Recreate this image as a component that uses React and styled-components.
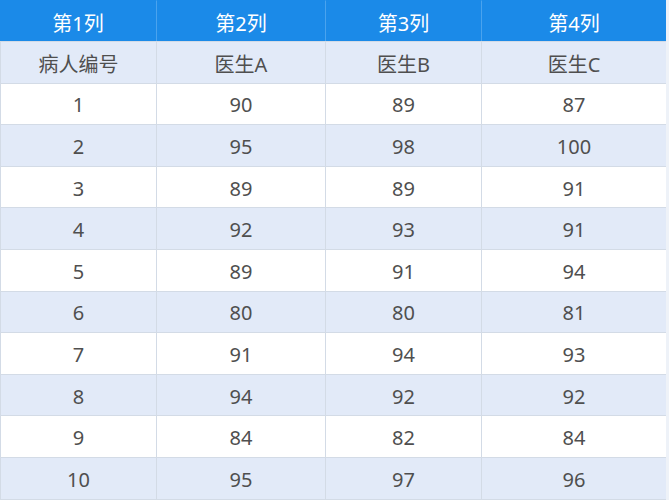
import React from "react";
import styled, { createGlobalStyle } from "styled-components";

const Global = createGlobalStyle`
  body {
    margin: 0;
    background: #eef2f8;
    font-family: "Noto Sans", "Noto Sans CJK SC", sans-serif;
  }
`;

const Table = styled.div`
  width: 666px;
  display: grid;
  grid-template-columns: 156px 169px 156px 185px;
  border-bottom: 1px solid #d3dbe6;
  border-right: 1px solid #d3dbe6;
  box-sizing: border-box;
`;

const Cell = styled.div`
  height: ${(p) => (p.$head ? "41px" : "41.6px")};
  display: flex;
  align-items: center;
  justify-content: center;
  box-sizing: border-box;
  padding-top: 2px;
  font-size: 20px;
  color: ${(p) => (p.$head ? "#ffffff" : "#4f4f4f")};
  font-weight: 400;
  background: ${(p) => (p.$head ? "#1b8ae8" : p.$alt ? "#e2eaf8" : "#ffffff")};
  border-left: 1px solid ${(p) => (p.$head ? "#4aa3ee" : "#d3dbe6")};
  border-top: 1px solid ${(p) => (p.$head ? "#1b8ae8" : "#d3dbe6")};
  &:first-child {
    border-left: none;
  }
`;

const header = ["第1列", "第2列", "第3列", "第4列"];
const rows = [
  ["病人编号", "医生A", "医生B", "医生C"],
  ["1", "90", "89", "87"],
  ["2", "95", "98", "100"],
  ["3", "89", "89", "91"],
  ["4", "92", "93", "91"],
  ["5", "89", "91", "94"],
  ["6", "80", "80", "81"],
  ["7", "91", "94", "93"],
  ["8", "94", "92", "92"],
  ["9", "84", "82", "84"],
  ["10", "95", "97", "96"],
];

export default function App() {
  return (
    <>
      <Global />
      <Table>
        {header.map((h, i) => (
          <Cell key={"h" + i} $head>
            {h}
          </Cell>
        ))}
        {rows.map((r, ri) =>
          r.map((c, ci) => (
            <Cell key={ri + "-" + ci} $alt={ri % 2 === 0}>
              {c}
            </Cell>
          ))
        )}
      </Table>
    </>
  );
}
